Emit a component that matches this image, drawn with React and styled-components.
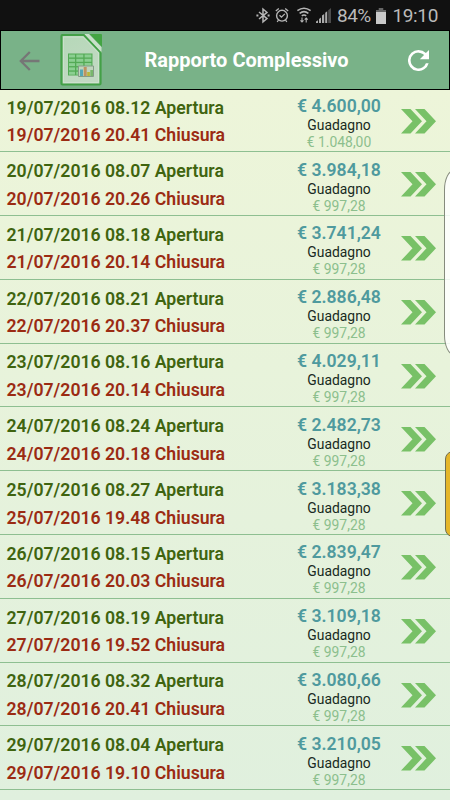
import React from "react";
import styled, { createGlobalStyle } from "styled-components";

const reports = [
	{ day: "19", open: "08.12", close: "20.41", total: "4.600,00", gain: "1.048,00" },
	{ day: "20", open: "08.07", close: "20.26", total: "3.984,18", gain: "997,28" },
	{ day: "21", open: "08.18", close: "20.14", total: "3.741,24", gain: "997,28" },
	{ day: "22", open: "08.21", close: "20.37", total: "2.886,48", gain: "997,28" },
	{ day: "23", open: "08.16", close: "20.14", total: "4.029,11", gain: "997,28" },
	{ day: "24", open: "08.24", close: "20.18", total: "2.482,73", gain: "997,28" },
	{ day: "25", open: "08.27", close: "19.48", total: "3.183,38", gain: "997,28" },
	{ day: "26", open: "08.15", close: "20.03", total: "2.839,47", gain: "997,28" },
	{ day: "27", open: "08.19", close: "19.52", total: "3.109,18", gain: "997,28" },
	{ day: "28", open: "08.32", close: "20.41", total: "3.080,66", gain: "997,28" },
	{ day: "29", open: "08.04", close: "19.10", total: "3.210,05", gain: "997,28" },
];

function StatusIcons() {
	return (
		<svg width="78" height="20" viewBox="0 0 78 20" fill="none" stroke="#b5b5b5">
			{/* bluetooth */}
			<path d="M3 6l8 6.6-4 3.4V3l4 3.4L3 13" strokeWidth="1.5" />
			<path d="M0.4 9.5h2M11.6 9.5h2" strokeWidth="1.8" />
			{/* alarm */}
			<circle cx="26" cy="9.7" r="5.4" strokeWidth="1.4" />
			<path d="M23.5 9.2l2 2 3.3-3.3M19.8 4.9l3-2.5M32.2 4.9l-3-2.5M22.5 14l-1.3 2M29.5 14l1.3 2" strokeWidth="1.3" />
			{/* wifi */}
			<path d="M41.4 4.6q6.6-4.8 13.2 0M43.6 7.3q4.4-3.4 8.8 0M45.8 9.8q2.2-1.7 4.4 0" strokeWidth="1.6" />
			<path d="M46 11.5V16M44.5 14.3l1.5 1.7 1.5-1.7M50.2 16.5V12M48.7 13.7l1.5-1.7 1.5 1.7" strokeWidth="1.1" />
			{/* signal */}
			<g stroke="none" fill="#aaa">
				<path d="M60 17v-1.5l2-1.2V17zM63 17v-4l2-1.5V17zM66 17V9.5L68.2 8v9zM69.2 17V6.8l2-1.5V17z" />
				<path d="M72.2 17V4.2L75 2v15z" fill="#4c4c4c" />
			</g>
		</svg>
	);
}

function SheetIcon() {
	return (
		<svg width="44" height="54" viewBox="0 0 44 54">
			<defs>
				<linearGradient id="paper" x1="0" y1="0" x2="0.4" y2="1">
					<stop offset="0" stopColor="#b5d8b8" />
					<stop offset="1" stopColor="#c2d9c3" />
				</linearGradient>
			</defs>
			<path d="M2.5 2H25l16.5 17v31.5q0 1-1 1h-37q-1 0-1-1V3q0-1 1-1z" fill="url(#paper)" stroke="#43a047" strokeWidth="2.2" />
			<path d="M4.5 4H24l15.5 16v29.5h-35z" fill="none" stroke="#d2e4d3" strokeWidth="0.7" />
			<path d="M25 1h5l12.5 13v6z" fill="#c9e0ca" />
			<path d="M24.5 1.5L42 20" stroke="#43a047" strokeWidth="1.6" />
			<path d="M30.5 1H42q1 0 1 1v12z" fill="#43a443" />
			<path d="M9 20.5h24.5v22H9z" fill="#53aa55" />
			<g fill="#8bcf91">
				{[21.5, 25.8, 30.1, 34.4, 38.7].map((y) => (
					<React.Fragment key={y}>
						<path d={`M10 ${y}h6v3h-6z`} />
						<path d={`M17.3 ${y}h7v3h-7z`} />
						<path d={`M25.6 ${y}h6.8v3h-6.8z`} />
					</React.Fragment>
				))}
			</g>
			<path d="M19.5 33h15v10.5h-15z" fill="#c0d4bd" stroke="#849c87" />
			<path d="M21 36.5h3V43h-3z" fill="#55a8b5" />
			<path d="M24.7 34h3v9h-3z" fill="#bd9361" />
			<path d="M28.2 39h2.7v4h-2.7z" fill="#b9b638" />
			<path d="M31.3 37H34v6h-2.7z" fill="#78b66c" />
		</svg>
	);
}

function ReportRow({ report }) {
	return (
		<Row>
			<Times>
				<Time $color="#3f640f">{report.day}/07/2016 {report.open} Apertura</Time>
				<Time $color="#9b2b13">{report.day}/07/2016 {report.close} Chiusura</Time>
			</Times>
			<Amounts>
				<Total>€ {report.total}</Total>
				<Label>Guadagno</Label>
				<Gain>€ {report.gain}</Gain>
			</Amounts>
			<Chevrons width="35" height="25" viewBox="0 0 35 25">
				<path d="M0 0h9.5L21 12.3 9.5 24.6H0L11.5 12.3z" />
				<path d="M14 0h9.5L35 12.3 23.5 24.6H14l11.5-12.3z" />
			</Chevrons>
		</Row>
	);
}

function App() {
	return (
		<Screen>
			<GlobalStyle />
			<StatusBar>
				<StatusIcons />
				<Percent>84%</Percent>
				<svg width="10" height="16" viewBox="0 0 11 16" preserveAspectRatio="none">
					<path d="M3 0h5v2h3v14H0V2h3z" fill="#666" />
					<path d="M0 4h11v12H0z" fill="#c9c9c9" />
				</svg>
				<Clock>19:10</Clock>
			</StatusBar>
			<Header>
				<svg width="21" height="20" viewBox="0 0 21 20" fill="none" stroke="#767676" strokeWidth="2.3">
					<path d="M20.5 10H2M10.8 1L1.8 10l9 9" />
				</svg>
				<SheetIcon />
				<Heading>Rapporto Complessivo</Heading>
				<svg width="21" height="21" viewBox="4 4 16 16" fill="#fff">
					<path d="M17.65 6.35A7.96 7.96 0 0 0 12 4a8 8 0 1 0 7.73 10h-2.08A6 6 0 1 1 12 6c1.66 0 3.14.69 4.22 1.78L13 11h7V4z" />
				</svg>
			</Header>
			<List>
				{reports.map((report) => (
					<ReportRow key={report.day} report={report} />
				))}
			</List>
			<EdgePanel />
			<EdgeHandle />
		</Screen>
	);
}

const GlobalStyle = createGlobalStyle`
	body {
		margin: 0;
		font-family: Roboto, "Liberation Sans", sans-serif;
	}
	* {
		box-sizing: border-box;
	}
	svg {
		display: block;
		flex-shrink: 0;
	}
`;

const Screen = styled.div`
	position: relative;
	width: 450px;
	height: 800px;
	overflow: hidden;
	background: linear-gradient(#edf5d9 90px, #e0f0de 800px);
`;

const StatusBar = styled.div`
	display: flex;
	align-items: center;
	height: 30px;
	padding: 1px 12px 0 256px;
	background: #111;
	color: #bababa;
	white-space: nowrap;
`;

const Percent = styled.span`
	width: 35px;
	margin: 0 4px 0 3px;
	font-size: 19px;
	letter-spacing: -0.5px;
`;

const Clock = styled.span`
	margin-left: auto;
	font-size: 19px;
	letter-spacing: -0.35px;
`;

const Header = styled.header`
	display: flex;
	align-items: center;
	height: 60px;
	padding: 0 20px 0 18px;
	border: 1px solid #000;
	background: #79b288;

	> svg:first-child {
		margin-top: 2px;
	}

	> svg:nth-child(2) {
		margin-left: 19px;
	}

	> svg:last-child {
		margin-top: 1px;
		margin-left: auto;
	}
`;

const Heading = styled.h1`
	margin: 0 0 0 41.5px;
	color: #fff;
	font-size: 20px;
	font-weight: 700;
	line-height: 24px;
	white-space: nowrap;
`;

const List = styled.main`
	margin-top: -1.5px;
`;

const Row = styled.div`
	display: flex;
	align-items: center;
	height: 63.8px;
	padding: 0 14px 0 6.5px;
	border-bottom: 1px solid #8ebf91;
	white-space: nowrap;

	&:first-child {
		border-top: 1.5px solid #000;
	}
`;

const Times = styled.div`
	width: 282.5px;
	padding-top: 4px;
`;

const Time = styled.div`
	color: ${(props) => props.$color};
	font-size: 17.66px;
	font-weight: 600;
	line-height: 27.7px;
`;

const Amounts = styled.div`
	width: 100px;
	margin-right: 12px;
	padding-top: 5px;
	text-align: center;
`;

const Total = styled.div`
	color: #4f9a9e;
	font-size: 17.6px;
	font-weight: 600;
	line-height: 22px;
`;

const Label = styled.div`
	color: #182a22;
	font-size: 13.9px;
	line-height: 17px;
`;

const Gain = styled.div`
	color: #8cbf8d;
	font-size: 13.9px;
	line-height: 16px;
`;

const Chevrons = styled.svg`
	margin-top: 2px;
	fill: #78c167;
`;

const EdgePanel = styled.div`
	position: absolute;
	top: 170px;
	left: 444px;
	width: 20px;
	height: 185px;
	border: 1px solid #858b7c;
	border-radius: 10px / 20px;
	background: rgba(255, 255, 255, 0.85);
`;

const EdgeHandle = styled.div`
	position: absolute;
	top: 451px;
	left: 445px;
	width: 20px;
	height: 86px;
	border: 1px solid #6f6e53;
	border-radius: 8px;
	background: #e5b62a;
`;

export default App;
